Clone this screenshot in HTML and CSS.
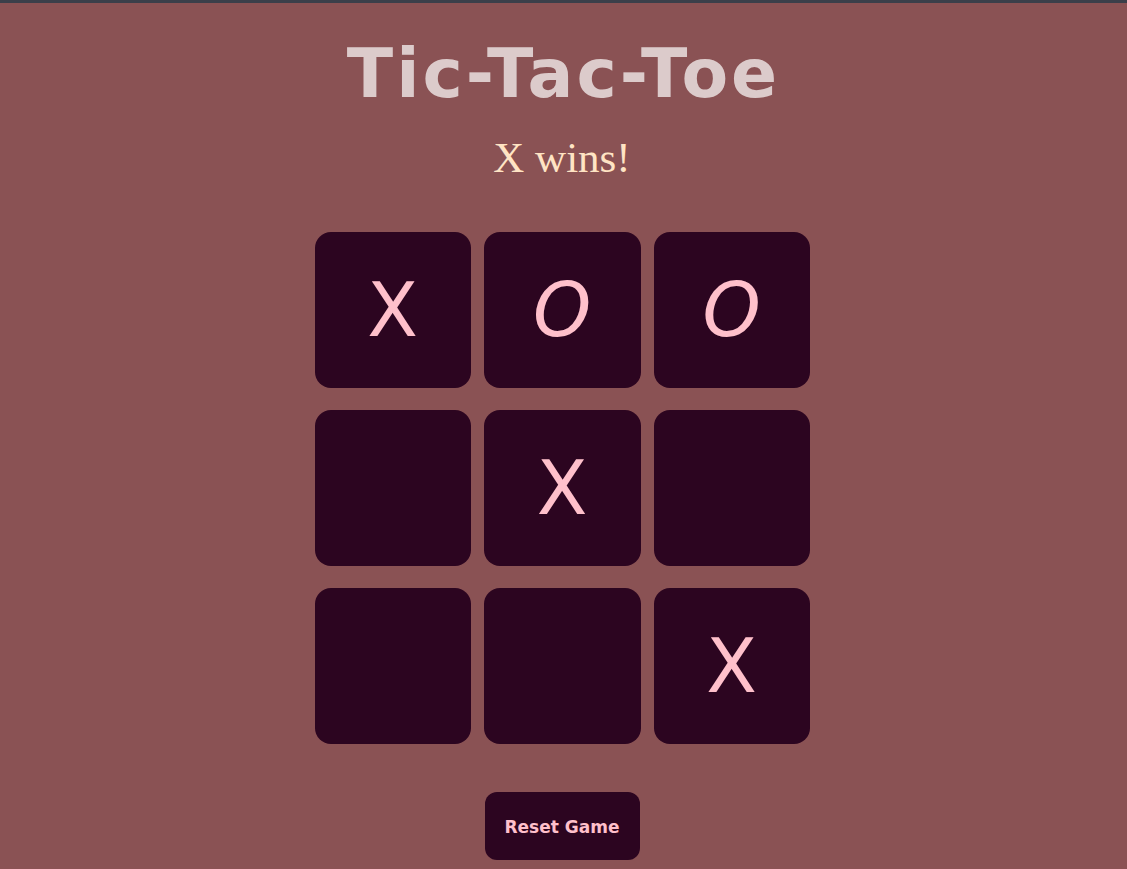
FILE: index.html
```html
<!DOCTYPE html>
<html lang="en">
<head>
<meta charset="utf-8">
<title>Tic-Tac-Toe</title>
<link rel="stylesheet" href="styles.css">
</head>
<body>
<div class="topbar"></div>
<main class="game">
  <h1 class="title">Tic-Tac-Toe</h1>
  <p class="status">X wins!</p>
  <div class="board">
    <div class="cell">X</div>
    <div class="cell o">O</div>
    <div class="cell o">O</div>
    <div class="cell"></div>
    <div class="cell">X</div>
    <div class="cell"></div>
    <div class="cell"></div>
    <div class="cell"></div>
    <div class="cell">X</div>
  </div>
  <button class="reset">Reset Game</button>
</main>
</body>
</html>
```
FILE: styles.css
```css
html, body {
  margin: 0;
  padding: 0;
  height: 100%;
}
body {
  background: #8a5254;
  overflow: hidden;
}
.topbar {
  height: 3px;
  background: #3b3f4a;
}
.game {
  display: flex;
  flex-direction: column;
  align-items: center;
  padding-right: 3px;
}
.title {
  margin: 31px 0 0;
  padding-left: 3px;
  font-family: "DejaVu Sans", sans-serif;
  font-weight: bold;
  font-size: 68px;
  line-height: 80px;
  letter-spacing: 3px;
  color: #dccbcb;
}
.status {
  margin: 20px 0 0;
  font-family: "Liberation Serif", serif;
  font-size: 43px;
  line-height: 48px;
  color: #ffe4c4;
}
.board {
  margin-top: 50px;
  display: grid;
  grid-template-columns: 156px 157px 156px;
  grid-auto-rows: 156px;
  column-gap: 13px;
  row-gap: 22px;
}
.cell {
  background: #2c0520;
  border-radius: 16px;
  display: flex;
  align-items: center;
  justify-content: center;
  font-family: "DejaVu Sans", sans-serif;
  font-size: 74px;
  color: #ffc0cb;
  line-height: 1;
}
.cell.o {
  font-style: italic;
}
.reset {
  margin-top: 48px;
  width: 155px;
  height: 68px;
  border: none;
  border-radius: 12px;
  background: #2c0520;
  color: #ffc0cb;
  font-family: "DejaVu Sans", sans-serif;
  font-weight: bold;
  font-size: 17px;
  padding-top: 2px;
  cursor: pointer;
}
```
